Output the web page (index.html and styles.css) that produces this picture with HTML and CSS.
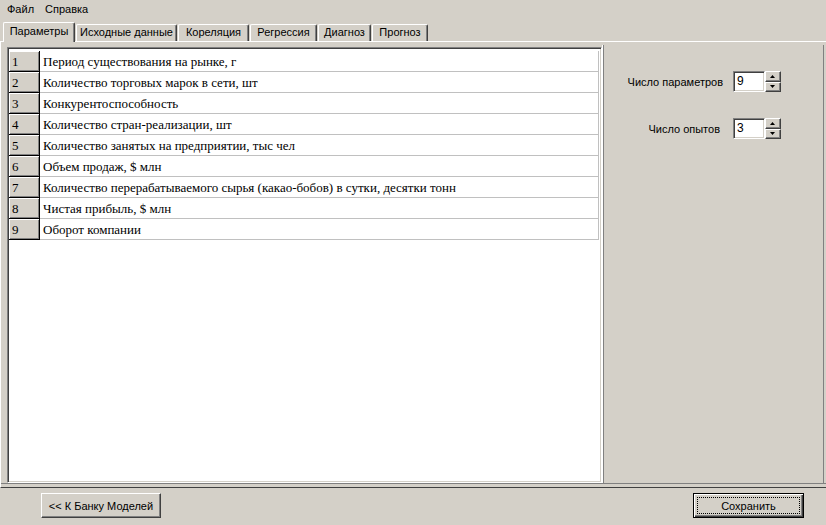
FILE: index.html
```html
<!DOCTYPE html>
<html lang="ru">
<head>
<meta charset="utf-8">
<title>Параметры</title>
<link rel="stylesheet" href="styles.css">
</head>
<body>
<div class="menu"><span>Файл</span><span>Справка</span></div>
<div class="tabs">
  <div class="tab active w1">Параметры</div>
  <div class="tab w2">Исходные данные</div>
  <div class="tab w3">Кореляция</div>
  <div class="tab w4">Регрессия</div>
  <div class="tab w5">Диагноз</div>
  <div class="tab w6">Прогноз</div>
</div>
<div class="page">
  <div class="body">
    <div class="grid">
      <div class="row"><div class="fixed">1</div><div class="cell">Период существования на рынке, г</div></div>
      <div class="row"><div class="fixed">2</div><div class="cell">Количество торговых марок в сети, шт</div></div>
      <div class="row"><div class="fixed">3</div><div class="cell">Конкурентоспособность</div></div>
      <div class="row"><div class="fixed">4</div><div class="cell">Количество стран-реализации, шт</div></div>
      <div class="row"><div class="fixed">5</div><div class="cell">Количество занятых на предприятии, тыс чел</div></div>
      <div class="row"><div class="fixed">6</div><div class="cell">Объем продаж, $ млн</div></div>
      <div class="row"><div class="fixed">7</div><div class="cell">Количество перерабатываемого сырья (какао-бобов) в сутки, десятки тонн</div></div>
      <div class="row"><div class="fixed">8</div><div class="cell">Чистая прибыль, $ млн</div></div>
      <div class="row"><div class="fixed">9</div><div class="cell">Оборот компании</div></div>
    </div>
    <div class="side">
      <div class="field">
        <span class="label">Число параметров</span>
        <div class="spin">
          <div class="input">9</div>
          <div class="btns">
            <div class="sbtn"><svg width="5" height="3" viewBox="0 0 5 3"><polygon points="2.5,0 5,3 0,3" fill="#000"/></svg></div>
            <div class="sbtn"><svg width="5" height="3" viewBox="0 0 5 3"><polygon points="0,0 5,0 2.5,3" fill="#000"/></svg></div>
          </div>
        </div>
      </div>
      <div class="field">
        <span class="label short">Число опытов</span>
        <div class="spin">
          <div class="input">3</div>
          <div class="btns">
            <div class="sbtn"><svg width="5" height="3" viewBox="0 0 5 3"><polygon points="2.5,0 5,3 0,3" fill="#000"/></svg></div>
            <div class="sbtn"><svg width="5" height="3" viewBox="0 0 5 3"><polygon points="0,0 5,0 2.5,3" fill="#000"/></svg></div>
          </div>
        </div>
      </div>
    </div>
  </div>
</div>
<div class="footer">
  <div class="button back">&lt;&lt; К Банку Моделей</div>
  <div class="button save"><span class="focus">Сохранить</span></div>
</div>
</body>
</html>
```
FILE: styles.css
```css
* { box-sizing: border-box; }
html, body { margin: 0; padding: 0; }
body {
  width: 826px;
  height: 525px;
  overflow: hidden;
  background: #d4d0c8;
  color: #000;
  font: 11px "Liberation Sans", Arial, sans-serif;
}
.menu {
  height: 19px;
  display: flex;
  align-items: center;
  gap: 11px;
  padding: 0 0 1px 7px;
}
.tabs {
  height: 22px;
  display: flex;
  align-items: flex-end;
  gap: 1px;
  padding-left: 3px;
  position: relative;
  z-index: 1;
}
.tab {
  height: 17px;
  border-top: 1px solid #fff;
  border-left: 1px solid #fff;
  border-right: 1px solid #404040;
  box-shadow: inset -1px 0 #808080;
  border-radius: 2px 2px 0 0;
  text-align: center;
  line-height: 15px;
  white-space: nowrap;
  background: #d4d0c8;
}
.tab.active {
  height: 20px;
  margin-bottom: -1px;
  line-height: 17px;
}
.w1 { width: 72px; }
.w2 { width: 101px; }
.w3 { width: 71px; }
.w4 { width: 67px; }
.w5 { width: 53px; }
.w6 { width: 56px; }
.page {
  height: 447px;
  border-top: 1px solid #fff;
  border-left: 1px solid #fff;
  border-bottom: 1px solid #404040;
  display: flex;
  flex-direction: column;
}
.body {
  height: 442px;
  border-bottom: 1px solid #808080;
  display: flex;
  padding: 5px 0 0 6px;
}
.grid {
  width: 595px;
  height: 436px;
  background: #fff;
  border: 1px solid;
  border-color: #808080 #fff #fff #808080;
  box-shadow: inset 1px 1px #404040, inset -1px -1px #d4d0c8;
  padding: 3px 1px 1px 1px;
  font: 13px "Liberation Serif", "Times New Roman", serif;
}
.row {
  display: flex;
  height: 21px;
}
.fixed {
  width: 31px;
  height: 21px;
  background: #d4d0c8;
  border-right: 1px solid #000;
  border-bottom: 1px solid #000;
  box-shadow: inset 1px 1px #fff, inset -1px -1px #808080;
  padding: 1px 0 0 3px;
  line-height: 19px;
}
.cell {
  width: 559px;
  height: 21px;
  border-right: 1px solid #c0c0c0;
  border-bottom: 1px solid #c0c0c0;
  padding: 1px 0 0 3px;
  line-height: 19px;
  white-space: nowrap;
}
.side {
  width: 222px;
  height: 438px;
  margin-top: -2px;
  border-left: 1px solid #fff;
  border-right: 1px solid #808080;
  box-shadow: inset 1px 0 #808080;
  display: flex;
  flex-direction: column;
  gap: 26px;
  padding-top: 26px;
}
.field {
  display: grid;
  grid-template-columns: 120px 48px;
  column-gap: 10px;
  align-items: center;
}
.label {
  text-align: right;
  white-space: nowrap;
  padding-top: 1px;
}
.label.short { padding-right: 3px; }
.spin {
  display: flex;
  height: 21px;
}
.input {
  width: 32px;
  height: 21px;
  background: #fff;
  border: 1px solid;
  border-color: #808080 #fff #fff #808080;
  box-shadow: inset 1px 1px #404040, inset -1px -1px #d4d0c8;
  padding-left: 3px;
  line-height: 18px;
  font-size: 12px;
}
.btns {
  width: 16px;
  height: 21px;
  display: flex;
  flex-direction: column;
}
.sbtn {
  height: 10px;
  flex: 1;
  background: #d4d0c8;
  border: 1px solid;
  border-color: #fff #404040 #404040 #fff;
  box-shadow: inset -1px -1px #808080;
  display: flex;
  align-items: center;
  justify-content: center;
}
.sbtn svg { display: block; margin-right: 1px; }
.footer {
  height: 37px;
  display: flex;
  justify-content: space-between;
  align-items: flex-start;
  padding: 5px 22px 0 41px;
}
.button {
  height: 25px;
  background: #d4d0c8;
  border: 1px solid;
  border-color: #fff #404040 #404040 #fff;
  box-shadow: inset -1px -1px #808080;
  display: flex;
  align-items: center;
  justify-content: center;
  white-space: nowrap;
}
.back { width: 120px; }
.save {
  width: 111px;
  border: 1px solid #000;
  box-shadow: inset 1px 1px #fff, inset -1px -1px #404040, inset -2px -2px #808080;
  padding: 3px;
}
.focus {
  flex: 1;
  align-self: stretch;
  border: 1px dotted #000;
  display: flex;
  align-items: center;
  justify-content: center;
}
```
